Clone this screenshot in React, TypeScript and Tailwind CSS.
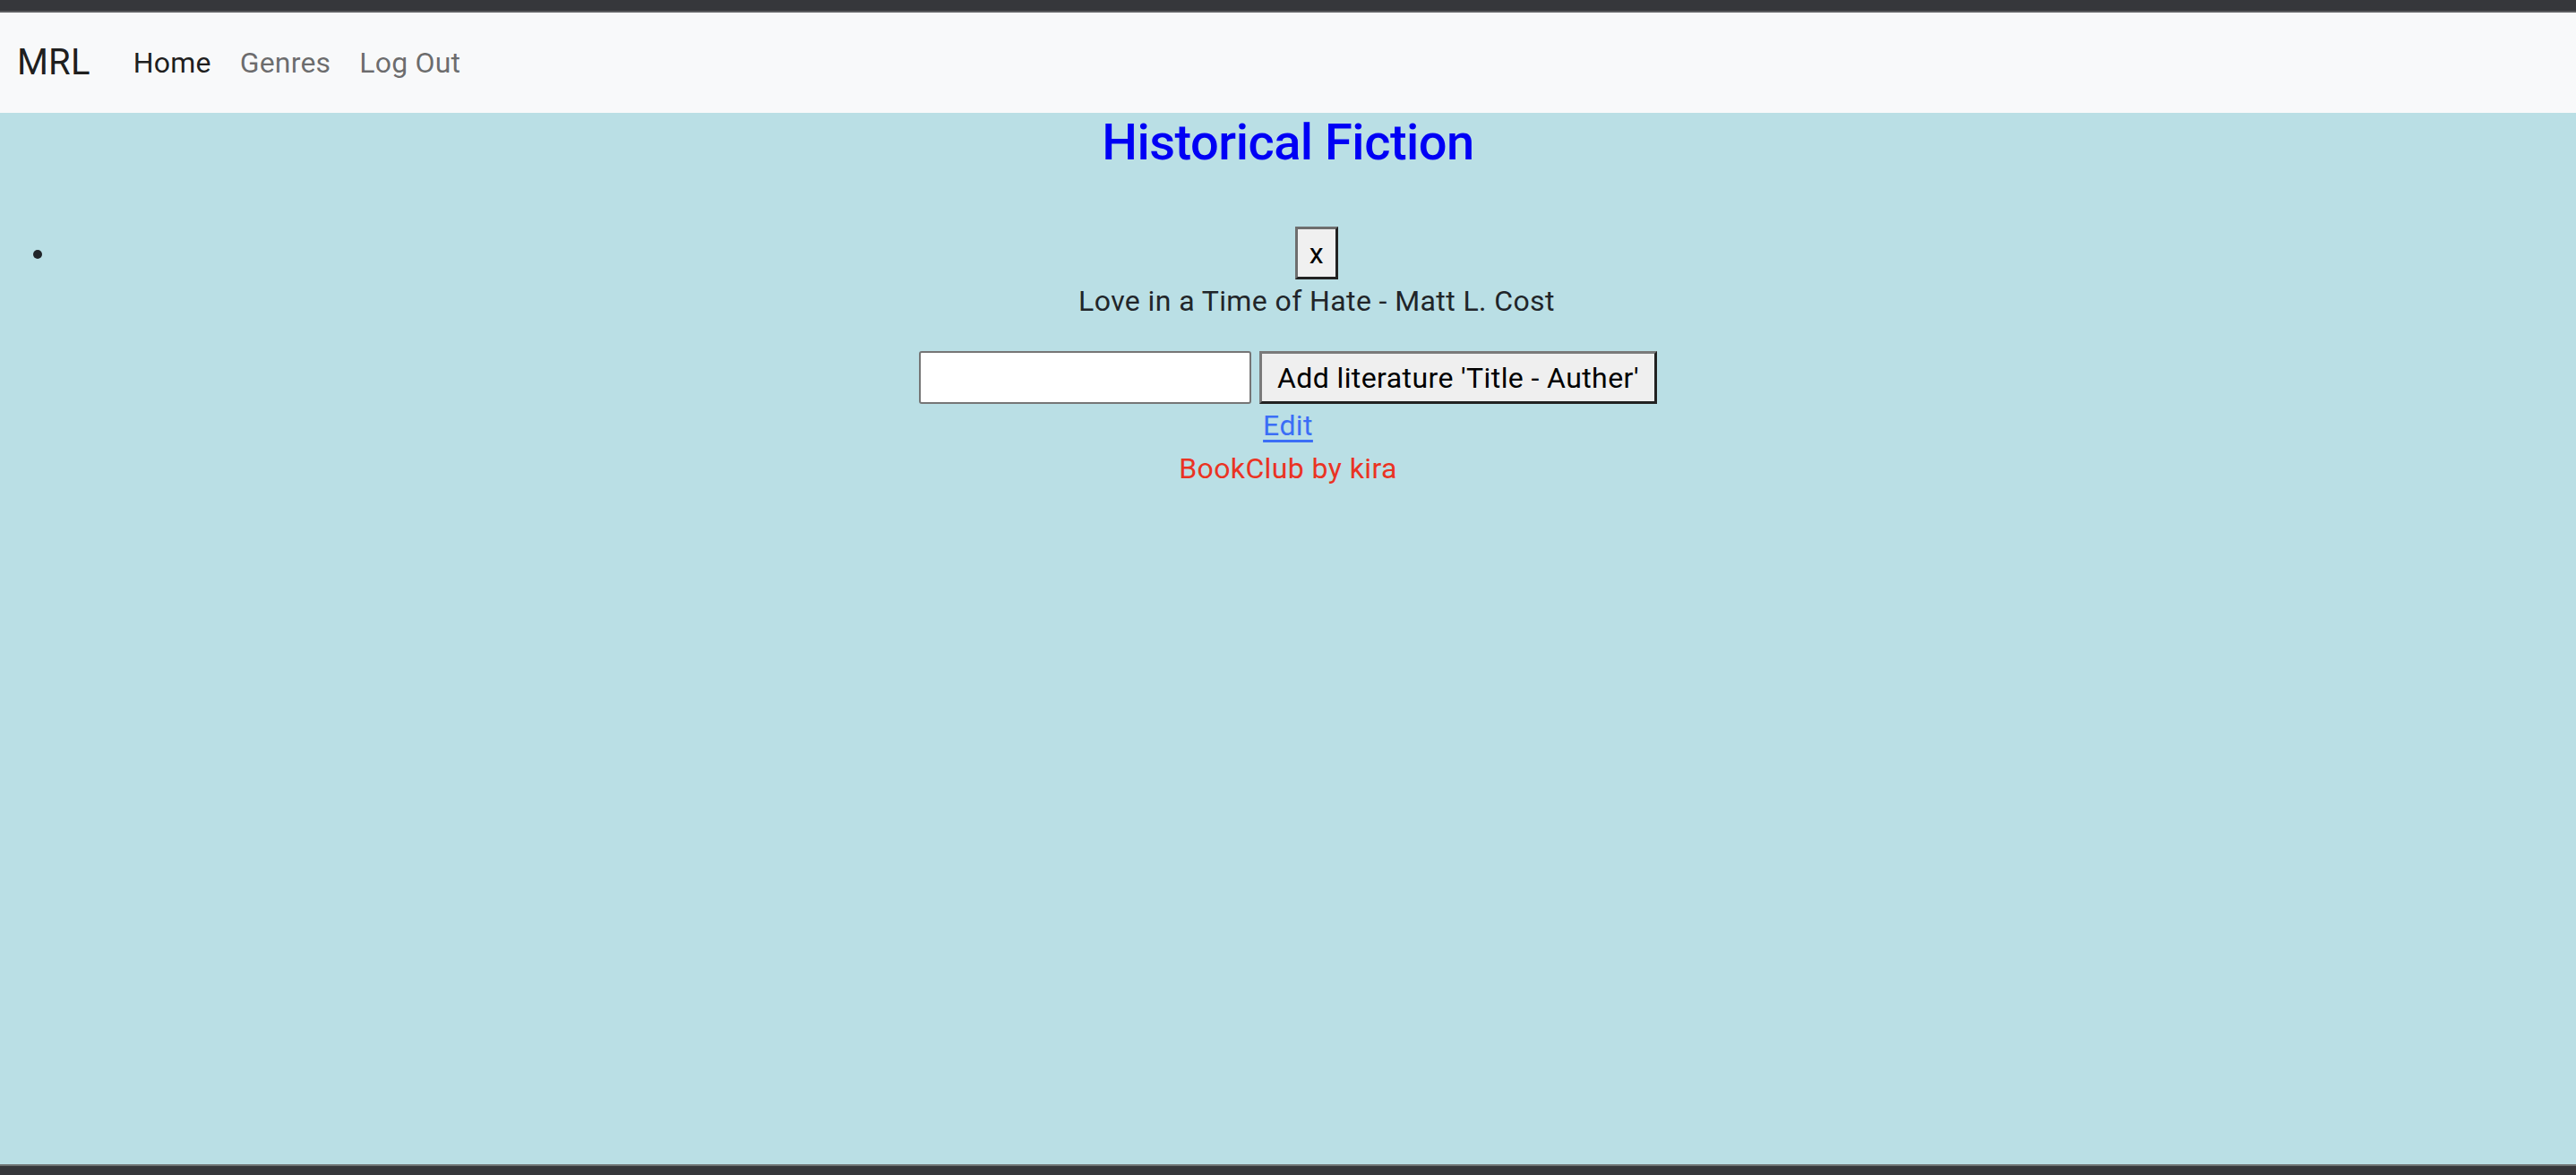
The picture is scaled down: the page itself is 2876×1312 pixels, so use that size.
import React from 'react';

const font = { fontFamily: 'Roboto, "Liberation Sans", Arial, sans-serif' };

function NavBar() {
  return (
    <nav className="flex h-[112px] items-center bg-[#f8f9fa] pl-[19px] tracking-[0.2px]">
      <a className="mr-[32px] py-[10px] text-[40px] leading-[60px] text-[#000000e6]">MRL</a>
      <a className="px-[16px] py-[8px] text-[32px] leading-[48px] text-[#000000e6]">Home</a>
      <a className="px-[16px] py-[8px] text-[32px] leading-[48px] text-[#00000094]">Genres</a>
      <a className="px-[16px] py-[8px] text-[32px] leading-[48px] text-[#00000094]">Log Out</a>
    </nav>
  );
}

function BookList() {
  const books = ['Love in a Time of Hate - Matt L. Cost'];
  return (
    <ul className="mt-[60px] list-disc pl-[64px] marker:text-[#212529]">
      {books.map((book) => (
        <li key={book}>
          <button className="h-[59px] w-[48px] border-[3px] border-t-[#6e6e6e] border-l-[#6e6e6e] border-b-[#222222] border-r-[#222222] bg-[#f0f0f0] text-[32px] leading-[48px] text-black">
            x
          </button>
          <p className="mb-[32px] text-[#212529]">{book}</p>
        </li>
      ))}
    </ul>
  );
}

export default function App() {
  return (
    <div
      className="flex h-[1312px] flex-col overflow-hidden text-[32px] leading-[48px] tracking-[0.4px]"
      style={font}
    >
      <div className="h-[12px] bg-[#36373b]" />
      <div className="h-[2px] bg-[#5c5d60]" />
      <NavBar />
      <main className="flex-1 bg-[#badfe5] text-center text-[#212529]">
        <h3 className="text-[56px] font-medium leading-[67px] tracking-[-0.5px] text-[#0000f5]">
          Historical Fiction
        </h3>
        <BookList />
        <form className="flex items-center justify-center gap-[9px]">
          <input
            type="text"
            className="h-[59px] w-[371px] rounded-[3px] border-2 border-[#767676] bg-white px-[4px]"
          />
          <button
            type="button"
            className="h-[59px] w-[444px] border-[3px] border-t-[#7a7a7a] border-l-[#7a7a7a] border-b-[#222222] border-r-[#222222] bg-[#efefef] text-[32px] text-black"
          >
            Add literature 'Title - Auther'
          </button>
        </form>
        <div>
          <a className="text-[#3b6ef6] underline underline-offset-[5px]" href="#">
            Edit
          </a>
        </div>
        <footer className="text-[#ea3323]">BookClub by kira</footer>
      </main>
      <div className="h-[2px] bg-[#6e7272]" />
      <div className="h-[10px] bg-[#36373b]" />
    </div>
  );
}
